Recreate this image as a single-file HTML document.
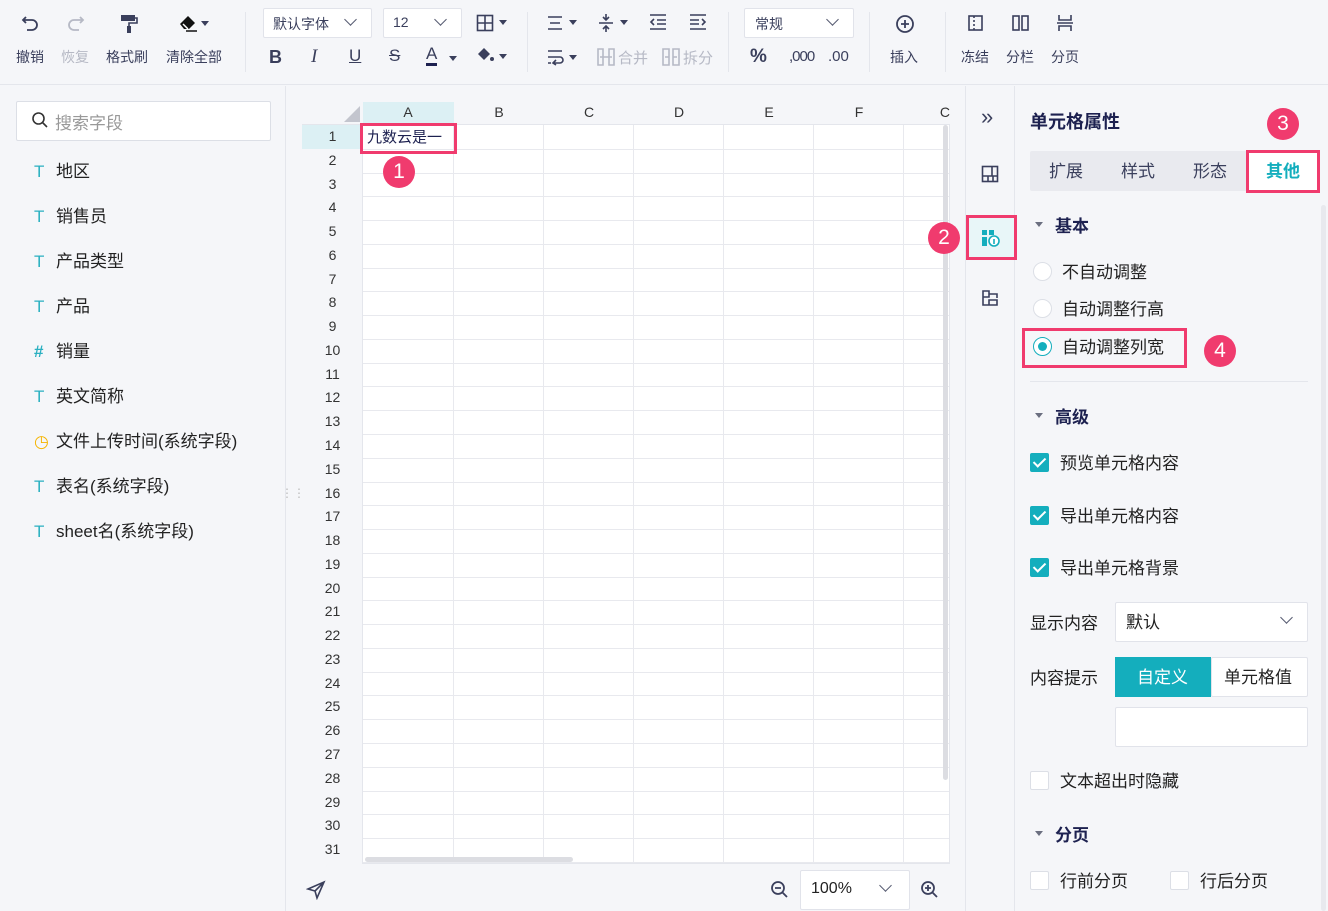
<!DOCTYPE html>
<html><head><meta charset="utf-8"><style>
*{box-sizing:border-box;margin:0;padding:0}
body{width:1328px;height:911px;overflow:hidden;background:#f5f6f9;font-family:"Liberation Sans","Noto Sans CJK SC",sans-serif;color:#222;position:relative;font-size:16px}
.a{position:absolute}
.tb{color:#3a3f5c;font-size:14px}
.dd{background:#fff;border:1px solid #e1e3ea;border-radius:2px}
.chev{position:absolute;width:9px;height:9px;border-right:1.6px solid #555a70;border-bottom:1.6px solid #555a70;transform:rotate(45deg)}
.tri{display:inline-block;width:0;height:0;border-left:4px solid transparent;border-right:4px solid transparent;border-top:5px solid #3a3f5c;vertical-align:middle}
.sep{position:absolute;top:12px;width:1px;height:60px;background:#e4e6ec}
.fld{position:absolute;left:34px;font-size:17px;color:#222;margin-top:-2px}
.fld b{color:#2bb0c1;font-weight:normal;display:inline-block;width:22px}
.rn{position:absolute;left:302px;width:61px;text-align:center;font-size:14px;color:#333}
.ch{position:absolute;top:104px;width:90px;text-align:center;font-size:14px;color:#333}
.badge{position:absolute;width:32px;height:32px;border-radius:50%;background:#f03b6e;color:#fff;font-size:21px;text-align:center;line-height:32px}
.pink{position:absolute;border:3px solid #f03b6e}
.cb{position:absolute;width:19px;height:19px;border:1px solid #dcdfe6;background:#fff;border-radius:2px}
.cbk{background:#14aebd;border-color:#14aebd}
.cbk:after{content:"";position:absolute;left:5px;top:1px;width:5px;height:10px;border-right:2px solid #fff;border-bottom:2px solid #fff;transform:rotate(45deg)}
.lbl{position:absolute;font-size:17px;color:#222;margin-top:-2px}
.radio{position:absolute;width:19px;height:19px;border-radius:50%;border:1px solid #dcdfe6;background:#fff}
.hl{position:absolute;left:363px;width:586px;height:1px;background:#e8e9ee}
</style></head><body>
<!-- toolbar -->
<div class="a" style="left:0;top:0;width:1328px;height:85px;background:#f5f6f9;border-bottom:1px solid #e4e6ec"></div>
<svg class="a" style="left:20px;top:13px" width="22" height="22" viewBox="0 0 22 22"><path d="M6 4 L3 7 L6 10 M3 7 H12 A5 5 0 0 1 12 17 H7" fill="none" stroke="#3a3f5c" stroke-width="1.8"/></svg>
<svg class="a" style="left:64px;top:13px" width="22" height="22" viewBox="0 0 22 22"><path d="M16 4 L19 7 L16 10 M19 7 H10 A5 5 0 0 0 10 17 H15" fill="none" stroke="#b6b9c5" stroke-width="1.8"/></svg>
<svg class="a" style="left:118px;top:12px" width="22" height="22" viewBox="0 0 22 22"><rect x="3" y="3" width="14" height="6" fill="#3a3f5c"/><path d="M17 6 H19 V11 H11 V14" fill="none" stroke="#3a3f5c" stroke-width="1.6"/><rect x="9" y="14" width="4" height="7" fill="#3a3f5c"/></svg>
<svg class="a" style="left:178px;top:12px" width="32" height="22" viewBox="0 0 32 22"><path d="M2 12 L10 4 L17 11 L11 17 H6 Z" fill="#111"/><path d="M5 12 L10 17" stroke="#fff" stroke-width="1.5"/><path d="M8 19 H19" stroke="#111" stroke-width="1.5"/><path d="M23 9 H31 L27 14Z" fill="#3a3f5c"/></svg>
<div class="a tb" style="left:16px;top:47px">撤销</div>
<div class="a tb" style="left:61px;top:47px;color:#b6b9c5">恢复</div>
<div class="a tb" style="left:106px;top:47px">格式刷</div>
<div class="a tb" style="left:166px;top:47px">清除全部</div>
<div class="sep" style="left:245px"></div>
<div class="a dd" style="left:263px;top:8px;width:109px;height:30px"></div><div class="a tb" style="left:273px;top:14px">默认字体</div><div class="chev" style="left:346px;top:15px"></div>
<div class="a dd" style="left:383px;top:8px;width:79px;height:30px"></div><div class="a tb" style="left:393px;top:14px">12</div><div class="chev" style="left:436px;top:15px"></div>
<svg class="a" style="left:476px;top:14px" width="34" height="18"><rect x="1.5" y="1.5" width="15" height="15" fill="none" stroke="#3a3f5c" stroke-width="1.6"/><path d="M9 1 V17 M1 9 H17" stroke="#3a3f5c" stroke-width="1.6"/><path d="M23 6 H31 L27 11Z" fill="#3a3f5c"/></svg>
<div class="a" style="left:269px;top:47px;font-size:18px;color:#3a3f5c;font-weight:bold">B</div>
<div class="a" style="left:311px;top:46px;font-size:19px;color:#3a3f5c;font-style:italic;font-family:'Liberation Serif',serif">I</div>
<div class="a" style="left:349px;top:46px;font-size:17px;color:#3a3f5c;text-decoration:underline">U</div>
<div class="a" style="left:389px;top:46px;font-size:17px;color:#3a3f5c;text-decoration:line-through">S</div>
<div class="a" style="left:426px;top:45px;font-size:17px;color:#3a3f5c;border-bottom:3px solid #1d2150;line-height:18px">A</div><span class="a tri" style="left:449px;top:56px"></span>
<svg class="a" style="left:476px;top:46px" width="34" height="20"><path d="M8 2 L14 8 L8 14 L2 8Z" fill="#3a3f5c"/><circle cx="16" cy="13" r="2" fill="#3a3f5c"/><path d="M23 8 H31 L27 13Z" fill="#3a3f5c"/></svg>
<div class="sep" style="left:527px"></div>
<svg class="a" style="left:546px;top:14px" width="34" height="18"><path d="M2 3 H16 M4 9 H14 M2 15 H16" stroke="#3a3f5c" stroke-width="1.6"/><path d="M23 6 H31 L27 11Z" fill="#3a3f5c"/></svg>
<svg class="a" style="left:597px;top:12px" width="34" height="22"><path d="M2 11 H16 M9 2 V8 M6 5 L9 8 L12 5 M9 20 V14 M6 17 L9 14 L12 17" stroke="#3a3f5c" stroke-width="1.6" fill="none"/><path d="M23 8 H31 L27 13Z" fill="#3a3f5c"/></svg>
<svg class="a" style="left:649px;top:13px" width="18" height="18"><path d="M1 2 H17 M8 7 H17 M8 11 H17 M1 16 H17 M5 6 L2 9 L5 12" stroke="#3a3f5c" stroke-width="1.6" fill="none"/></svg>
<svg class="a" style="left:689px;top:13px" width="18" height="18"><path d="M1 2 H17 M1 7 H10 M1 11 H10 M1 16 H17 M13 6 L16 9 L13 12" stroke="#3a3f5c" stroke-width="1.6" fill="none"/></svg>
<svg class="a" style="left:546px;top:48px" width="34" height="18"><path d="M2 3 H16 M2 9 H14 A3 3 0 0 1 14 15 H8 M10 12 L7 15 L10 17 M2 15 H5" stroke="#3a3f5c" stroke-width="1.6" fill="none"/><path d="M23 7 H31 L27 12Z" fill="#3a3f5c"/></svg>
<svg class="a" style="left:597px;top:48px" width="18" height="18"><path d="M1 1 H6 V17 H1Z M12 1 H17 V17 H12Z M3 9 H15" fill="none" stroke="#b6b9c5" stroke-width="1.6"/></svg>
<div class="a" style="left:618px;top:47px;font-size:15px;color:#b6b9c5">合并</div>
<svg class="a" style="left:662px;top:48px" width="18" height="18"><path d="M1 1 H7 V17 H1Z M11 1 H17 V17 H11Z M3 9 H7 M11 9 H15" fill="none" stroke="#b6b9c5" stroke-width="1.6"/></svg>
<div class="a" style="left:683px;top:47px;font-size:15px;color:#b6b9c5">拆分</div>
<div class="sep" style="left:728px"></div>
<div class="a dd" style="left:744px;top:8px;width:110px;height:30px"></div><div class="a tb" style="left:755px;top:14px">常规</div><div class="chev" style="left:828px;top:15px"></div>
<div class="a" style="left:750px;top:46px;font-size:19px;color:#3a3f5c;font-weight:bold">%</div>
<div class="a" style="left:789px;top:48px;font-size:15px;color:#3a3f5c;letter-spacing:-1px">,000</div>
<div class="a" style="left:828px;top:48px;font-size:15px;color:#3a3f5c">.00</div>
<div class="sep" style="left:869px"></div>
<svg class="a" style="left:894px;top:13px" width="22" height="22"><circle cx="11" cy="11" r="8" fill="none" stroke="#3a3f5c" stroke-width="1.8"/><path d="M11 7 V15 M7 11 H15" stroke="#3a3f5c" stroke-width="1.8"/></svg>
<div class="a tb" style="left:890px;top:47px">插入</div>
<div class="sep" style="left:945px"></div>
<svg class="a" style="left:967px;top:14px" width="18" height="18"><rect x="2" y="2" width="13" height="14" fill="none" stroke="#3a3f5c" stroke-width="1.6"/><path d="M7 2 V16" stroke="#3a3f5c" stroke-width="1.6" stroke-dasharray="2 2"/></svg>
<svg class="a" style="left:1011px;top:14px" width="20" height="18"><rect x="2" y="2" width="6" height="14" fill="none" stroke="#3a3f5c" stroke-width="1.6"/><rect x="11" y="2" width="6" height="14" fill="none" stroke="#3a3f5c" stroke-width="1.6"/></svg>
<svg class="a" style="left:1056px;top:14px" width="20" height="18"><path d="M3 1 V6 H15 V1 M1 9 H17 M3 17 V12 H15 V17" stroke="#3a3f5c" stroke-width="1.6" fill="none"/></svg>
<div class="a tb" style="left:961px;top:47px">冻结</div>
<div class="a tb" style="left:1006px;top:47px">分栏</div>
<div class="a tb" style="left:1051px;top:47px">分页</div>

<!-- left panel -->
<div class="a" style="left:0;top:86px;width:286px;height:825px;background:#f5f6f9;border-right:1px solid #e4e6ec"></div>
<div class="a" style="left:16px;top:101px;width:255px;height:40px;background:#fff;border:1px solid #dcdfe6;border-radius:2px"></div>
<svg class="a" style="left:31px;top:111px" width="18" height="18"><circle cx="7.5" cy="7.5" r="5.5" fill="none" stroke="#333" stroke-width="1.6"/><path d="M11.5 11.5 L16 16" stroke="#333" stroke-width="1.6"/></svg>
<div class="a" style="left:55px;top:109px;font-size:17px;color:#999">搜索字段</div>
<div class="fld" style="top:159px"><b>T</b>地区</div>
<div class="fld" style="top:204px"><b>T</b>销售员</div>
<div class="fld" style="top:249px"><b>T</b>产品类型</div>
<div class="fld" style="top:294px"><b>T</b>产品</div>
<div class="fld" style="top:339px"><b style="font-weight:bold">#</b>销量</div>
<div class="fld" style="top:384px"><b>T</b>英文简称</div>
<div class="fld" style="top:429px"><b style="color:#f5b400">◷</b>文件上传时间(系统字段)</div>
<div class="fld" style="top:474px"><b>T</b>表名(系统字段)</div>
<div class="fld" style="top:519px"><b>T</b>sheet名(系统字段)</div>
<div class="a" style="left:281px;top:490px;color:#bbb;font-size:12px;line-height:6px">⋮⋮</div>

<!-- grid -->
<div class="a" style="left:302px;top:102px;width:648px;height:762px;background:#fff;border:1px solid #e4e6ec;
background-image:repeating-linear-gradient(to right,transparent 0,transparent 89px,#e8e9ee 89px,#e8e9ee 90px);background-position:61px 0"></div>
<div id="lines"></div>
<div class="a" style="left:302px;top:102px;width:61px;height:762px;background:#f5f6f9;border-right:1px solid #e4e6ec"></div>
<div class="a" style="left:302px;top:102px;width:648px;height:23px;background:#f5f6f9;border-bottom:1px solid #e4e6ec"></div>
<div class="a" style="left:363px;top:102px;width:91px;height:23px;background:#dcf0f4"></div>
<div class="a" style="left:302px;top:125px;width:61px;height:24px;background:#dcf0f4"></div>
<svg class="a" style="left:343px;top:105px" width="18" height="18"><path d="M17 1 V17 H1Z" fill="#c3c5ce"/></svg>
<div class="ch" style="left:363px">A</div><div class="ch" style="left:454px">B</div><div class="ch" style="left:544px">C</div><div class="ch" style="left:634px">D</div><div class="ch" style="left:724px">E</div><div class="ch" style="left:814px">F</div><div class="ch" style="left:904px;width:46px;overflow:hidden;text-align:right">C</div>
<div class="a" style="left:943px;top:125px;width:5px;height:655px;background:#dcdde2;border-radius:3px"></div>
<div class="a" style="left:365px;top:857px;width:208px;height:5px;background:#dcdde2;border-radius:3px"></div>
<div id="rows"></div>
<div class="a" style="left:367px;top:126px;font-size:15px;color:#1d2150">九数云是一</div>
<div class="pink" style="left:360px;top:123px;width:97px;height:31px"></div>
<div class="badge" style="left:383px;top:156px">1</div>
<!-- bottom bar -->
<svg class="a" style="left:306px;top:880px" width="20" height="20"><path d="M2 9 L18 2 L11 18 L9 11Z M9 11 L18 2" fill="none" stroke="#3a3f5c" stroke-width="1.6"/></svg>
<svg class="a" style="left:770px;top:880px" width="20" height="20"><circle cx="8" cy="8" r="6" fill="none" stroke="#3a3f5c" stroke-width="1.8"/><path d="M5 8 H11 M12.5 12.5 L17 17" stroke="#3a3f5c" stroke-width="1.8"/></svg>
<div class="a dd" style="left:800px;top:870px;width:110px;height:40px"></div>
<div class="a" style="left:811px;top:880px;font-size:16px;color:#222">100%</div><div class="chev" style="left:881px;top:881px"></div>
<svg class="a" style="left:920px;top:880px" width="20" height="20"><circle cx="8" cy="8" r="6" fill="none" stroke="#3a3f5c" stroke-width="1.8"/><path d="M5 8 H11 M8 5 V11 M12.5 12.5 L17 17" stroke="#3a3f5c" stroke-width="1.8"/></svg>

<!-- side strip -->
<div class="a" style="left:965px;top:86px;width:50px;height:825px;background:#f5f6f9;border-left:1px solid #e4e6ec;border-right:1px solid #e4e6ec"></div>
<div class="a" style="left:981px;top:106px;font-size:22px;color:#3a3f5c;line-height:22px">»</div>
<svg class="a" style="left:981px;top:165px" width="18" height="18"><rect x="1.5" y="1.5" width="15" height="15" fill="none" stroke="#3a3f5c" stroke-width="1.6"/><path d="M1 11 H17 M7 11 V17 M12 11 V17 M11 1 V11" stroke="#3a3f5c" stroke-width="1.6"/></svg>
<div class="a" style="left:968px;top:217px;width:47px;height:42px;background:#e8f6f8"></div>
<svg class="a" style="left:981px;top:229px" width="19" height="18"><rect x="1" y="1" width="5" height="5" fill="#14aebd"/><rect x="8" y="1" width="5" height="5" fill="#14aebd"/><rect x="1" y="8" width="5" height="5" fill="#14aebd"/><rect x="1" y="13" width="5" height="4" fill="#14aebd"/><circle cx="13" cy="12" r="5" fill="#fff" stroke="#14aebd" stroke-width="1.6"/><path d="M13 10 V15" stroke="#14aebd" stroke-width="1.6"/></svg>
<div class="pink" style="left:966px;top:215px;width:51px;height:45px"></div>
<div class="badge" style="left:928px;top:222px">2</div>
<svg class="a" style="left:981px;top:289px" width="18" height="18"><path d="M2 2 H8 V8 H2Z M8 5 H16 V9 M2 8 V16 H16 V11 H8 V16" fill="none" stroke="#3a3f5c" stroke-width="1.6"/></svg>

<!-- right panel -->
<div class="a" style="left:1030px;top:108px;font-size:18px;font-weight:bold;color:#1d2150">单元格属性</div>
<div class="badge" style="left:1267px;top:108px">3</div>
<div class="a" style="left:1030px;top:151px;width:289px;height:40px;background:#e9eaef;border-radius:2px"></div>
<div class="a" style="left:1049px;top:157px;font-size:17px;color:#3a3f5c">扩展</div>
<div class="a" style="left:1121px;top:157px;font-size:17px;color:#3a3f5c">样式</div>
<div class="a" style="left:1193px;top:157px;font-size:17px;color:#3a3f5c">形态</div>
<div class="a" style="left:1248px;top:152px;width:71px;height:39px;background:#fff"></div>
<div class="a" style="left:1266px;top:157px;font-size:17px;color:#14aebd;font-weight:bold">其他</div>
<div class="pink" style="left:1246px;top:150px;width:74px;height:43px"></div>
<div class="a" style="left:1321px;top:205px;width:5px;height:706px;background:#e8e9ee;border-radius:3px"></div>
<span class="a tri" style="left:1035px;top:222px;border-top-color:#6b6f80"></span>
<div class="a" style="left:1055px;top:212px;font-size:17px;font-weight:bold;color:#1d2150">基本</div>
<div class="radio" style="left:1033px;top:262px"></div><div class="lbl" style="left:1062px;top:260px">不自动调整</div>
<div class="radio" style="left:1033px;top:299px"></div><div class="lbl" style="left:1062px;top:297px">自动调整行高</div>
<div class="radio" style="left:1033px;top:337px;border-color:#14aebd"></div><div class="a" style="left:1038px;top:342px;width:9px;height:9px;border-radius:50%;background:#14aebd"></div>
<div class="lbl" style="left:1062px;top:335px">自动调整列宽</div>
<div class="pink" style="left:1022px;top:328px;width:165px;height:40px"></div>
<div class="badge" style="left:1204px;top:335px">4</div>
<div class="a" style="left:1030px;top:381px;width:278px;height:1px;background:#e4e6ec"></div>
<span class="a tri" style="left:1035px;top:413px;border-top-color:#6b6f80"></span>
<div class="a" style="left:1055px;top:403px;font-size:17px;font-weight:bold;color:#1d2150">高级</div>
<div class="cb cbk" style="left:1030px;top:453px"></div><div class="lbl" style="left:1060px;top:451px">预览单元格内容</div>
<div class="cb cbk" style="left:1030px;top:506px"></div><div class="lbl" style="left:1060px;top:504px">导出单元格内容</div>
<div class="cb cbk" style="left:1030px;top:558px"></div><div class="lbl" style="left:1060px;top:556px">导出单元格背景</div>
<div class="lbl" style="left:1030px;top:611px">显示内容</div>
<div class="a dd" style="left:1115px;top:602px;width:193px;height:40px"></div>
<div class="lbl" style="left:1126px;top:610px">默认</div><div class="chev" style="left:1282px;top:613px"></div>
<div class="lbl" style="left:1030px;top:666px">内容提示</div>
<div class="a" style="left:1115px;top:657px;width:96px;height:40px;background:#14aebd"></div>
<div class="lbl" style="left:1137px;top:665px;color:#fff">自定义</div>
<div class="a dd" style="left:1211px;top:657px;width:97px;height:40px"></div>
<div class="lbl" style="left:1224px;top:665px">单元格值</div>
<div class="a dd" style="left:1115px;top:707px;width:193px;height:40px"></div>
<div class="cb" style="left:1030px;top:771px"></div><div class="lbl" style="left:1060px;top:769px">文本超出时隐藏</div>
<span class="a tri" style="left:1035px;top:831px;border-top-color:#6b6f80"></span>
<div class="a" style="left:1055px;top:821px;font-size:17px;font-weight:bold;color:#1d2150">分页</div>
<div class="cb" style="left:1030px;top:871px"></div><div class="lbl" style="left:1060px;top:869px">行前分页</div>
<div class="cb" style="left:1170px;top:871px"></div><div class="lbl" style="left:1200px;top:869px">行后分页</div>
<script>
var h='',l='';for(var i=1;i<=31;i++){var t=125+(i-1)*23.77;h+='<div class="rn" style="top:'+(t+3)+'px">'+i+'</div>';l+='<div class="hl" style="top:'+Math.round(t+23.77)+'px"></div>';}
document.getElementById('rows').innerHTML=h;document.getElementById('lines').innerHTML=l;
</script>
</body></html>
